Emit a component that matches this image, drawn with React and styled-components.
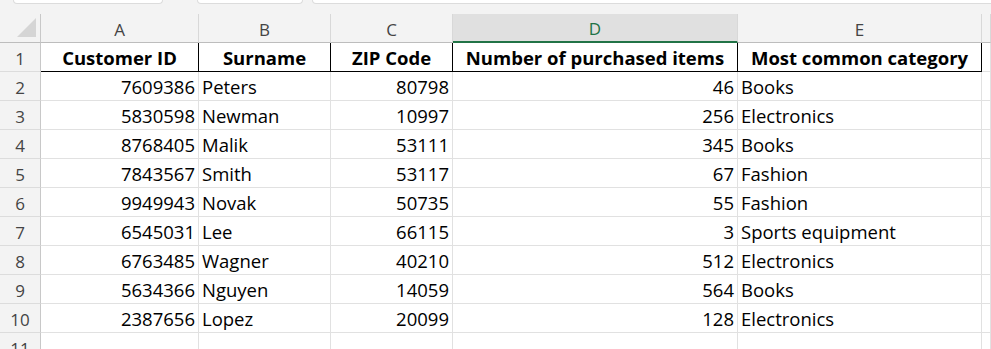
import React from "react";
import styled, { createGlobalStyle } from "styled-components";

const Global = createGlobalStyle`
  html, body { margin: 0; padding: 0; background: #f3f3f3; }
  body { width: 991px; height: 349px; overflow: hidden; }
`;

const COLS = [
  { key: "A", w: 158 },
  { key: "B", w: 132 },
  { key: "C", w: 122 },
  { key: "D", w: 285, selected: true },
  { key: "E", w: 244 },
];

const HEAD = ["Customer ID", "Surname", "ZIP Code", "Number of purchased items", "Most common category"];
const ROWS = [
  [7609386, "Peters", 80798, 46, "Books"],
  [5830598, "Newman", 10997, 256, "Electronics"],
  [8768405, "Malik", 53111, 345, "Books"],
  [7843567, "Smith", 53117, 67, "Fashion"],
  [9949943, "Novak", 50735, 55, "Fashion"],
  [6545031, "Lee", 66115, 3, "Sports equipment"],
  [6763485, "Wagner", 40210, 512, "Electronics"],
  [5634366, "Nguyen", 14059, 564, "Books"],
  [2387656, "Lopez", 20099, 128, "Electronics"],
];

const Page = styled.div`
  width: 991px;
  height: 349px;
  overflow: hidden;
  background: #f3f3f3;
  display: flex;
  flex-direction: column;
`;

const TopStrip = styled.div`
  height: 14px;
  display: flex;
  align-items: flex-start;
  flex-shrink: 0;
`;

const TopBox = styled.div`
  height: 3px;
  width: ${(p) => p.$w}px;
  margin-left: ${(p) => p.$ml}px;
  flex-shrink: 0;
  background: #ffffff;
  border: 1px solid #dcdcdc;
  border-top: none;
  border-radius: 0 0 6px 6px;
`;

const Grid = styled.div`
  display: grid;
  grid-template-columns: 41px ${COLS.map((c) => c.w + "px").join(" ")} 1fr;
  grid-template-rows: 29px repeat(11, 29px);
  flex: 1;
`;

const Corner = styled.div`
  background: #f3f3f3;
  border-right: 1px solid #c8c8c8;
  border-bottom: 1px solid #bdbdbd;
  display: flex;
  align-items: flex-end;
  justify-content: flex-end;
  padding: 0 4px 5px 0;
  box-sizing: border-box;
`;

const Triangle = styled.div`
  width: 0;
  height: 0;
  border-left: 19px solid transparent;
  border-bottom: 19px solid #d5d5d5;
`;

const ColHead = styled.div`
  box-sizing: border-box;
  background: ${(p) => (p.$selected ? "#e0e0e0" : "#f3f3f3")};
  border-right: 1px solid #d8d8d8;
  border-bottom: ${(p) => (p.$selected ? "2px solid #217346" : "1px solid #bdbdbd")};
  color: ${(p) => (p.$selected ? "#217346" : "#444444")};
  font-family: "Open Sans", "Noto Sans", sans-serif;
  font-size: 17px;
  display: flex;
  align-items: center;
  justify-content: center;
  padding-top: 2px;
`;

const RowHead = styled.div`
  box-sizing: border-box;
  background: #f3f3f3;
  border-right: 1px solid #c8c8c8;
  border-bottom: 1px solid #dcdcdc;
  color: #444444;
  font-family: "Open Sans", "Noto Sans", sans-serif;
  font-size: 17px;
  display: flex;
  align-items: center;
  justify-content: center;
  padding-top: 2px;
`;

const Cell = styled.div`
  box-sizing: border-box;
  background: #ffffff;
  border-right: 1px solid ${(p) => (p.$strong ? "#000000" : "#e1e1e1")};
  border-bottom: 1px solid ${(p) => (p.$strong ? "#000000" : "#e1e1e1")};
  font-family: "Open Sans", "Liberation Sans", sans-serif;
  font-size: 18.5px;
  font-weight: ${(p) => (p.$bold ? 700 : 400)};
  color: #000000;
  display: flex;
  align-items: flex-end;
  justify-content: ${(p) => (p.$align === "right" ? "flex-end" : p.$align === "center" ? "center" : "flex-start")};
  padding: 0 3px 1px 3px;
  white-space: nowrap;
  overflow: hidden;
  line-height: 24px;
`;

export default function App() {
  return (
    <>
      <Global />
      <Page>
        <TopStrip>
          <TopBox $ml={13} $w={148} />
          <TopBox $ml={34} $w={104} />
          <TopBox $ml={9} $w={700} />
        </TopStrip>
        <Grid>
          <Corner>
            <Triangle />
          </Corner>
          {COLS.map((c) => (
            <ColHead key={c.key} $selected={c.selected}>
              {c.key}
            </ColHead>
          ))}
          <ColHead />
          <RowHead>1</RowHead>
          {HEAD.map((h) => (
            <Cell key={h} $bold $strong $align="center">
              {h}
            </Cell>
          ))}
          <Cell />
          {ROWS.map((r, ri) => (
            <React.Fragment key={ri}>
              <RowHead>{ri + 2}</RowHead>
              {r.map((v, ci) => (
                <Cell key={ci} $align={typeof v === "number" ? "right" : "left"}>
                  {v}
                </Cell>
              ))}
              <Cell />
            </React.Fragment>
          ))}
          <RowHead>11</RowHead>
          {COLS.map((c) => (
            <Cell key={c.key} />
          ))}
          <Cell />
        </Grid>
      </Page>
    </>
  );
}
